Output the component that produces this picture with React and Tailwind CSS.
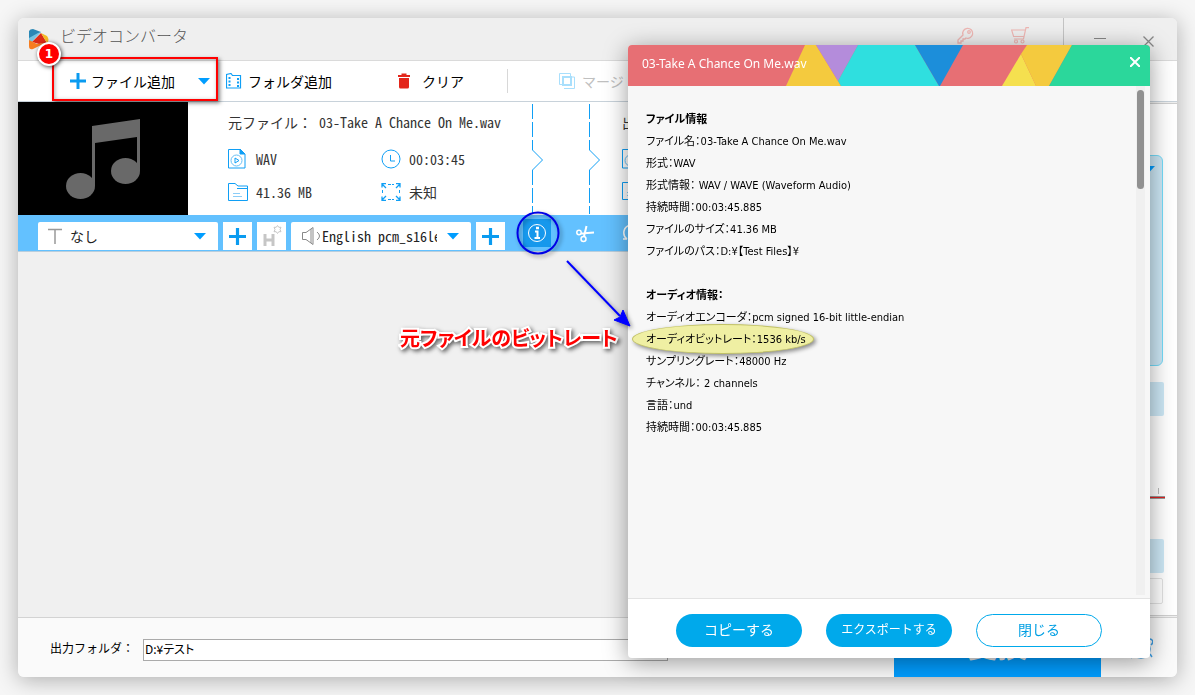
import React, { useState } from "react";

const MONO = "font-['Noto_Sans_Mono_CJK_JP','Liberation_Mono','Noto_Sans_CJK_JP',monospace]";

const fileInfo = [
  ["ファイル名：", "03-Take A Chance On Me.wav"],
  ["形式：", "WAV"],
  ["形式情報： ", "WAV / WAVE (Waveform Audio)"],
  ["持続時間：", "00:03:45.885"],
  ["ファイルのサイズ：", "41.36 MB"],
  ["ファイルのパス：", "D:¥【Test Files】¥"],
];

const audioInfo = [
  ["オーディオエンコーダ：", "pcm signed 16-bit little-endian"],
  ["オーディオビットレート：", "1536 kb/s", true],
  ["サンプリングレート：", "48000 Hz"],
  ["チャンネル： ", "2 channels"],
  ["言語：", "und"],
  ["持続時間：", "00:03:45.885"],
];

function Triangle({ className = "" }) {
  return (
    <svg width="12" height="7" viewBox="0 0 12 7" className={className}>
      <path d="M0 0h12L6 6.5z" fill="#009dff" />
    </svg>
  );
}

function Plus({ size }) {
  return (
    <svg width={size} height={size} viewBox="0 0 16 16" className="shrink-0">
      <path d="M8 0v16M0 8h16" stroke="#0a9bf0" strokeWidth="3" />
    </svg>
  );
}

function Logo() {
  return (
    <svg width="20" height="21" viewBox="0 0 20 21">
      <path d="M0 2Q1 0 4 0l8 3-12 9z" fill="#2a87b5" />
      <path d="M0 9 9 4l3-1-12 13z" fill="#74c3e2" />
      <path d="M3 13 12 4l6 10-8 1z" fill="#dc2c17" />
      <path d="M12 4l6 3q3 4 0 7z" fill="#f4b925" />
      <path d="M0 11l8 4 8-1-12 6q-4 1-4-3z" fill="#f77d20" />
    </svg>
  );
}

function FolderFilmIcon() {
  return (
    <svg width="16" height="16" viewBox="0 0 16 16" fill="none" stroke="#109ff5">
      <path d="M.5 15V1.500L5 .5l1.500 2h8v12.500H.5z" strokeWidth="1.200" />
      <path d="M3.500 4v10M12 5v9" strokeWidth="2" strokeDasharray="2 1.500" />
    </svg>
  );
}

function TrashIcon() {
  return (
    <svg width="12" height="16" viewBox="0 0 12 16" fill="#e3261b">
      <path d="M3.500 2V.5h5V2H12v2H0V2zM1 5h10v9q0 1.500-1.500 1.500h-7Q1 15.500 1 14z" />
    </svg>
  );
}

function MergeIcon() {
  return (
    <svg width="16" height="16" viewBox="0 0 16 16" fill="none" stroke="#a9dffc">
      <path d="M3 11.500H.5V.5h11V3M5 15.500h10.500V4H13v0" />
      <rect x="4" y="4" width="8" height="8" strokeWidth="2" />
    </svg>
  );
}

function FormatIcon() {
  return (
    <svg width="18" height="20" viewBox="0 0 18 20" fill="none" stroke="#109ff5">
      <path d="M.5.5h12l4.500 4.500v14H.5z" />
      <path d="M12 0l5 5h-5z" fill="#109ff5" />
      <circle cx="8.500" cy="11.500" r="5.500" stroke="#66bff5" />
      <path d="M7 9v5l4-2.500z" />
    </svg>
  );
}

function SizeIcon() {
  return (
    <svg width="20" height="18" viewBox="0 0 20 18" fill="none" stroke="#109ff5">
      <path d="M.5 17.500V.5H7L10 3h9.500v14.500z" />
      <path d="M9 5.500h10" />
      <path d="M5 10.500h7M5 13.500h9" stroke="#8ccdf7" />
    </svg>
  );
}

function ClockIcon() {
  return (
    <svg width="20" height="20" viewBox="0 0 20 20" fill="none" stroke="#109ff5">
      <circle cx="10" cy="10" r="9" />
      <path d="M9.500 6v6H14" />
    </svg>
  );
}

function ResolutionIcon() {
  return (
    <svg width="20" height="18" viewBox="0 0 20 18" fill="none" stroke="#109ff5">
      <path d="M5 .5H1v4M1 1l4 4M15 .5h4v4M19 1l-4 4M5 17.500H1v-4M1 17l4-4M15 17.500h4v-4M19 17l-4-4" strokeWidth="1.300" />
      <path d="M7 1.500h6M7 16.500h6M1.500 7v4M18.500 7v4" strokeDasharray="3 1" />
    </svg>
  );
}

function DashedArrow() {
  return (
    <svg width="12" height="110" viewBox="0 0 12 110" fill="none" stroke="#109ff5" className="shrink-0">
      <path d="M.5 0v46" strokeDasharray="15 3" />
      <path d="M.5 46l10 10-10 10" />
      <path d="M.5 66v44" strokeDasharray="15 3" />
    </svg>
  );
}

function MusicThumb() {
  return (
    <svg viewBox="0 0 170 113" className="h-[113px] w-[170px] shrink-0 bg-black">
      <g fill="#696969">
        <path d="M74 24l48-7v52h-3V35l-42 6v43h-3z" />
        <ellipse cx="62.500" cy="84" rx="14.500" ry="13" />
        <ellipse cx="107.500" cy="69" rx="14.500" ry="13" />
      </g>
    </svg>
  );
}

function TitleBar() {
  return (
    <header className="flex h-[43px] items-center border-b border-[#dadada] bg-[#efefef] pl-[11px]">
      <Logo />
      <h1 className="mb-2 ml-[11px] text-base font-light text-[#555]">ビデオコンバータ</h1>
      <div className="ml-auto flex h-full items-center">
        <button type="button" aria-label="登録" className="mb-2">
          <svg width="17" height="17" viewBox="0 0 17 17" fill="none" stroke="#efb7b4" strokeWidth="1.300">
            <path d="M6 8a5 5 0 1 1 3 3l-1 1H6v2H4v2H1v-3z" />
            <circle cx="12" cy="5" r="1.300" />
          </svg>
        </button>
        <button type="button" aria-label="購入" className="mb-2 ml-[37px]">
          <svg width="18" height="17" viewBox="0 0 18 17" fill="none" stroke="#efb7b4" strokeWidth="1.200">
            <path d="M18 .6h-3L12.500 12H3M14 3H.6l2 6.500H13" />
            <circle cx="5" cy="14.500" r="1.500" />
            <circle cx="11.500" cy="14.500" r="1.500" />
          </svg>
        </button>
        <div className="ml-[34px] h-full border-l border-[#c4c4c4]" />
        <button type="button" aria-label="最小化" className="ml-[30px]">
          <svg width="12" height="12" viewBox="0 0 12 12">
            <path d="M0 5.500h12" stroke="#888" />
          </svg>
        </button>
        <button type="button" aria-label="ウィンドウを閉じる" className="mr-[23px] ml-[37px] pt-1">
          <svg width="11" height="11" viewBox="0 0 11 11">
            <path d="M.5.5l10 10M10.500.5l-10 10" stroke="#888" strokeWidth="1.300" />
          </svg>
        </button>
      </div>
    </header>
  );
}

function Toolbar() {
  return (
    <nav className="flex h-[41px] items-center border-b border-[#c8d2da] bg-white text-sm text-black">
      <div className="relative ml-9 flex h-full w-[162px] shrink-0 items-center">
        <button type="button" className="flex items-center gap-[5px] pl-4">
          <Plus size={16} />
          ファイル追加
        </button>
        <button type="button" aria-label="追加メニュー" className="mr-[6px] ml-auto">
          <Triangle />
        </button>
        {/* callout frame with its step number */}
        <div className="pointer-events-none absolute -inset-x-[2px] -top-1 bottom-0 z-10 border-2 border-[#f00] shadow-[2px_2px_4px_rgba(0,0,0,0.5),inset_1px_1px_4px_rgba(0,0,0,0.3)]" />
        <span className="absolute -top-[19px] -left-[17px] z-20 flex size-6 items-center justify-center rounded-full border-2 border-white bg-[#f00] font-['DejaVu_Sans',sans-serif] text-xs font-bold text-white shadow-[1px_1px_4px_rgba(0,0,0,0.7)]">
          1
        </span>
      </div>
      <button type="button" className="ml-[10px] flex shrink-0 items-center gap-[6px]">
        <FolderFilmIcon />
        フォルダ追加
      </button>
      <button type="button" className="ml-[66px] flex shrink-0 items-center gap-3">
        <TrashIcon />
        クリア
      </button>
      <div className="ml-[43px] h-6 border-l border-[#d8d8d8]" />
      <button type="button" disabled className="ml-[51px] flex shrink-0 items-center gap-[7px] text-[#c0c0c0]">
        <MergeIcon />
        マージ
      </button>
    </nav>
  );
}

function MediaDetails() {
  return (
    <div className={`${MONO} w-[304px] shrink-0 text-sm leading-5 text-[#333]`}>
      <p className="whitespace-pre">元ファイル： 03-Take A Chance On Me.wav</p>
      <div className="mt-[17px] grid grid-cols-[153px_1fr] gap-y-[13px]">
        <p className="flex items-center gap-[10px]">
          <FormatIcon />
          WAV
        </p>
        <p className="flex items-center gap-2">
          <ClockIcon />
          00:03:45
        </p>
        <p className="flex items-center gap-2">
          <SizeIcon />
          41.36 MB
        </p>
        <p className="flex items-center gap-2">
          <ResolutionIcon />
          未知
        </p>
      </div>
    </div>
  );
}

function TrackBar() {
  return (
    <div className="flex h-[37px] items-end gap-[5px] border-b border-[#b9cedd] bg-[#63c1ff] pb-px pl-5">
      <label className="flex h-7 w-[180px] shrink-0 items-center rounded-t-xs bg-white pr-3 pl-[10px]">
        <svg width="14" height="16" viewBox="0 0 14 16" className="shrink-0">
          <path d="M0 1.500h14M7 1v15" stroke="#999" strokeWidth="1.500" />
        </svg>
        <select aria-label="字幕" className={`${MONO} ml-2 min-w-0 flex-1 appearance-none text-sm text-[#222] outline-none`}>
          <option>なし</option>
        </select>
        <Triangle />
      </label>
      <button type="button" aria-label="字幕を追加" className="flex h-7 w-[29px] items-center justify-center bg-white">
        <Plus size={17} />
      </button>
      <button type="button" aria-label="ハードコード字幕" disabled className="flex h-7 w-[29px] items-center justify-center bg-white">
        <svg width="20" height="22" viewBox="0 0 20 22">
          <path d="M3 9v12M11 9v12M3 15h8" stroke="#c6c6c6" strokeWidth="3" />
          <path d="M15.500 .5l1.300 1.800h2.200l-1 2.200 1 2.200h-2.200l-1.300 1.800-1.300-1.800H12l1-2.200-1-2.200h2.200z" fill="none" stroke="#c6c6c6" />
        </svg>
      </button>
      <label className="flex h-7 w-[180px] shrink-0 items-center rounded-t-xs bg-white pr-3 pl-[11px]">
        <svg width="20" height="18" viewBox="0 0 20 18" fill="none" stroke="#888" className="shrink-0">
          <path d="M.5 5.500H4l7-5v17l-7-5H.5zM9 2v14M15 5q5 4 0 8" />
        </svg>
        <select aria-label="音声トラック" className={`${MONO} min-w-0 flex-1 appearance-none text-sm text-[#222] outline-none`}>
          <option>English pcm_s16le</option>
        </select>
        <Triangle className="ml-[10px]" />
      </label>
      <button type="button" aria-label="音声を追加" className="flex h-7 w-[29px] shrink-0 items-center justify-center bg-white">
        <Plus size={17} />
      </button>
      <div className="relative mb-[3px] ml-[13px] size-7 shrink-0">
        <button type="button" aria-label="ファイル情報" className="flex size-7 items-center justify-center bg-[#1698ec]">
          <svg width="20" height="20" viewBox="0 0 20 20" fill="none" stroke="white">
            <circle cx="10" cy="10" r="8.500" />
            <path d="M8 8.500h2.500V15M7.500 15h5.500" strokeWidth="2" />
            <path d="M9 5h3" strokeWidth="2.500" />
          </svg>
        </button>
        <svg width="130" height="130" viewBox="0 0 130 130" className="pointer-events-none absolute -top-[10px] -left-[10px] z-30 drop-shadow-[2px_2px_2px_rgba(0,0,0,0.4)]">
          <circle cx="25" cy="24" r="20.500" fill="none" stroke="#0000e6" strokeWidth="2" />
          <path d="M54 52l53 55" stroke="#00f" strokeWidth="2" />
          <path d="M117 117l-16-6 6-3 3-7z" fill="#00f" stroke="#00f" />
        </svg>
      </div>
      <button type="button" aria-label="切り取り" className="mb-[7px] ml-5 shrink-0">
        <svg width="18" height="18" viewBox="0 0 18 18" fill="none" stroke="white" strokeWidth="1.500">
          <circle cx="3" cy="7.500" r="2.200" />
          <circle cx="7.500" cy="14" r="2.500" />
          <path d="M5 8.500l13-1M8 11.500L10.500 1" strokeWidth="2" />
        </svg>
      </button>
      <button type="button" aria-label="回転" className="mb-2 ml-[23px] shrink-0">
        <svg width="18" height="18" viewBox="0 0 18 18" fill="none" stroke="white" strokeWidth="1.500">
          <path d="M5 15H1M5 15Q1 12 2 7t7-6 7 6-3 8" />
        </svg>
      </button>
    </div>
  );
}

function FileList() {
  return (
    <main className="min-w-0 flex-1 overflow-hidden bg-[#f0f0f0]">
      <article className="flex h-[113px] bg-white">
        <MusicThumb />
        <div className="flex min-w-0 pt-[10px] pl-10">
          <MediaDetails />
        </div>
        <div className="flex shrink-0 gap-[45px] pt-[2px]">
          <DashedArrow />
          <DashedArrow />
        </div>
        <div className={`${MONO} ml-[21px] shrink-0 pt-[10px] text-sm leading-5 text-[#333]`}>
          <p>出力</p>
          <div className="mt-[17px] flex flex-col gap-[13px]">
            <FormatIcon />
            <SizeIcon />
          </div>
        </div>
      </article>
      <TrackBar />
      <p className="mt-[72px] ml-[382px] text-xl font-bold whitespace-nowrap text-[#f00] [font-feature-settings:'palt'] [paint-order:stroke_fill] [-webkit-text-stroke:4px_white] drop-shadow-[2px_2px_2px_rgba(0,0,0,0.6)]">
        元ファイルのビットレート
      </p>
    </main>
  );
}

function Sidebar() {
  return (
    <aside className="flex w-[281px] shrink-0 flex-col bg-[#efefef] py-px">
      <div className="flex-1 border-y border-[#cfcfcf] bg-white px-[14px] pt-[51px]">
        <div className="flex h-[211px] justify-end rounded-md border border-[#74dcfa] bg-[#cde8f6] pt-[10px] pr-[7px]">
          <Triangle />
        </div>
        <div className="mt-4 -mr-px h-[34px] rounded-xs bg-[#cde8f6]" />
        <div className="mt-[72px] flex h-[7px] justify-end pr-1">
          <div className="h-[6px] border-l border-[#bbb]" />
        </div>
        <div className="-mr-[2px] mt-px h-[3px] border-y border-[#999] bg-[#d22]" />
        <div className="mt-10 -mr-px h-[34px] rounded-xs bg-[#cde8f6]" />
        <div className="mt-[5px] h-[26px] rounded-xs border border-[#e2e2e2]" />
      </div>
    </aside>
  );
}

function OutputBar({ folder, onFolder }) {
  return (
    <footer className="flex h-[60px] shrink-0 items-center border-t border-[#d3d3d3] bg-[#fafafa] pl-8 text-xs text-black">
      <label htmlFor="out" className="shrink-0">
        出力フォルダ：
      </label>
      <input
        id="out"
        value={folder}
        onChange={(e) => onFolder(e.target.value)}
        className="mt-[5px] ml-[9px] h-[22px] w-[525px] border border-[#aaa] bg-white px-px pb-1 [font-feature-settings:'palt'] outline-none"
      />
      <button type="button" className="mr-[27px] ml-auto h-full w-[207px] shrink-0 bg-[#009dff] pb-2 text-3xl leading-8 font-bold text-[#e9e9e9]">
        変換
      </button>
      <button type="button" aria-label="スケジュール" className="mr-6 shrink-0">
        <svg width="25" height="25" viewBox="0 0 25 25" fill="none" stroke="#3d9fe6" strokeWidth="1.500">
          <circle cx="13" cy="14" r="9" />
          <path d="M19 5q3-2 5 0t-1 5M22 19l2 3M5 20l-2 3" />
        </svg>
      </button>
    </footer>
  );
}

function InfoRow({ label, value, marked }) {
  return (
    <p className="relative w-fit whitespace-pre">
      {label}
      {value}
      {marked && (
        <span className="absolute -top-[5px] -right-2 -left-[14px] h-[30px] rounded-[50%] border border-[#c9c96a] bg-[#f7f7a8] mix-blend-multiply shadow-[2px_2px_4px_rgba(0,0,0,0.45)]" />
      )}
    </p>
  );
}

function InfoDialog() {
  return (
    <section
      role="dialog"
      aria-label="ファイル情報"
      className="absolute top-[27px] right-[27px] bottom-[19px] z-20 flex w-[522px] flex-col rounded bg-white shadow-[0_4px_24px_rgba(0,0,0,0.4)]"
    >
      <div className="relative flex h-[41px] shrink-0 items-center overflow-hidden rounded-t bg-[#e76f74] pr-[10px] pl-[14px]">
        <svg viewBox="0 0 522 41" preserveAspectRatio="none" className="absolute inset-0 size-full">
          <path d="M177 0h11l25 41h-55z" fill="#f4ca3e" />
          <path d="M188 0h42l-20 36z" fill="#b48cdb" />
          <path d="M230 0h57l24 41h-98l-3-5z" fill="#2fdfdf" />
          <path d="M287 0h48l-23 41h-1z" fill="#1c8eda" />
          <path d="M374 41l19-32 15 32z" fill="#f5e04f" />
          <path d="M399 0h45l-23 41h-13L393 9z" fill="#f4ca3e" />
          <path d="M444 0h78v41H421z" fill="#2bd79b" />
        </svg>
        <h2 className="relative pb-1 font-['Noto_Sans','Noto_Sans_CJK_JP',sans-serif] text-xs text-white">03-Take A Chance On Me.wav</h2>
        <button type="button" aria-label="閉じる" className="relative mb-2 ml-auto">
          <svg width="10" height="10" viewBox="0 0 10 10">
            <path d="M0 0l10 10M10 0L0 10" stroke="white" strokeWidth="2" />
          </svg>
        </button>
      </div>
      <div className="flex min-h-0 flex-1 bg-[#f7f7f7] pr-[5px] pl-[18px]">
        <div className="flex-1 pt-[23px] font-['DejaVu_Sans_Condensed','Noto_Sans_CJK_JP',sans-serif] text-[11px] leading-[22px] text-black [font-feature-settings:'palt']">
          <h3 className="font-bold">ファイル情報</h3>
          {fileInfo.map(([label, value]) => (
            <InfoRow key={label} label={label} value={value} />
          ))}
          <h3 className="mt-[22px] font-bold">オーディオ情報：</h3>
          {audioInfo.map(([label, value, marked]) => (
            <InfoRow key={label} label={label} value={value} marked={marked} />
          ))}
        </div>
        <div className="mb-[3px] w-[9px] bg-[#f0f0f0] px-px pt-1">
          <div className="h-[99px] rounded-full bg-[#919191]" />
        </div>
      </div>
      <div className="flex h-[60px] shrink-0 items-center justify-center gap-6 rounded-b border-t border-[#e3e3e3] pt-[3px]">
        <button type="button" className="h-[33px] w-[126px] rounded-full bg-[#00a9eb] pb-[2px] text-sm text-white">
          コピーする
        </button>
        <button type="button" className="h-[33px] w-[126px] rounded-full bg-[#00a9eb] pb-[2px] text-xs text-white">
          エクスポートする
        </button>
        <button type="button" className="h-[33px] w-[126px] rounded-full border border-[#00a9eb] bg-white pb-[2px] text-sm text-[#009fe3]">
          閉じる
        </button>
      </div>
    </section>
  );
}

export default function App() {
  const [folder, setFolder] = useState("D:¥テスト");

  return (
    <div className="flex min-h-screen bg-[#f6f6f6] p-[18px] font-['Noto_Sans_CJK_JP',sans-serif]">
      <div className="relative flex min-w-0 flex-1 flex-col rounded-md shadow-[0_3px_22px_rgba(0,0,0,0.3)]">
        <div className="flex flex-1 flex-col overflow-hidden rounded-md">
          <TitleBar />
          <Toolbar />
          <div className="flex flex-1">
            <FileList />
            <Sidebar />
          </div>
          <OutputBar folder={folder} onFolder={setFolder} />
        </div>
        <InfoDialog />
      </div>
    </div>
  );
}
